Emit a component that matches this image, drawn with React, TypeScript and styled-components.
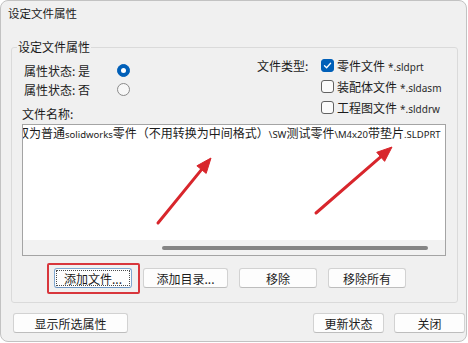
import React from "react";
import styled, { createGlobalStyle } from "styled-components";

const GlobalStyle = createGlobalStyle`
  html, body {
    margin: 0;
    padding: 0;
    background: #ffffff;
  }
  body {
    font-family: "Noto Sans CJK SC", "Noto Sans", sans-serif;
    font-size: 12px;
    color: #1b1b1b;
  }
  * {
    box-sizing: border-box;
  }
`;

const Window = styled.div`
  width: 467px;
  height: 342px;
  background: #f0f0f0;
  border: 1px solid #c2c2c2;
  border-radius: 8px;
  display: flex;
  flex-direction: column;
  overflow: hidden;
`;

const TitleBar = styled.div`
  height: 25px;
  line-height: 25px;
  padding-left: 7px;
  font-size: 11.5px;
  color: #1a1a1a;
`;

const Group = styled.fieldset`
  margin: 13px 8px 0 10px;
  padding: 0 10px 14px 10px;
  border: 1px solid #dadada;
  border-radius: 3px;
  min-width: 0;
`;

const Legend = styled.legend`
  padding: 0 1px;
  margin-left: -5px;
  line-height: 16px;
  font-size: 12px;
`;

const TopSection = styled.div`
  display: flex;
`;

const LeftCol = styled.div`
  width: 235px;
  padding-top: 6px;
  display: flex;
  flex-direction: column;
`;

const RadioRow = styled.label`
  display: flex;
  align-items: center;
  height: 19px;
  margin-left: 2px;
`;

const RadioText = styled.span`
  width: 93px;
`;

const Radio = styled.span<{ $on?: boolean }>`
  width: 13px;
  height: 13px;
  border-radius: 50%;
  display: flex;
  align-items: center;
  justify-content: center;
  background: ${p => (p.$on ? "#005fb8" : "#f7f7f7")};
  border: 1px solid ${p => (p.$on ? "#005fb8" : "#8a8a8a")};

  &::after {
    content: "";
    display: ${p => (p.$on ? "block" : "none")};
    width: 5px;
    height: 5px;
    border-radius: 50%;
    background: #ffffff;
  }
`;

const FieldLabel = styled.div`
  height: 19px;
  line-height: 19px;
  margin-top: 5px;
`;

const RightCol = styled.div`
  display: flex;
`;

const TypeLabel = styled.div`
  width: 64px;
  height: 21px;
  line-height: 21px;
`;

const TypeList = styled.div`
  display: flex;
  flex-direction: column;
`;

const CheckRow = styled.label`
  display: flex;
  align-items: center;
  height: 21px;
  gap: 3px;
`;

const Check = styled.span<{ $on?: boolean }>`
  width: 13px;
  height: 13px;
  border-radius: 3px;
  display: flex;
  align-items: center;
  justify-content: center;
  background: ${p => (p.$on ? "#005fb8" : "#fbfbfb")};
  border: 1px solid ${p => (p.$on ? "#005fb8" : "#626262")};
`;

const Ext = styled.span`
  font-family: "Noto Sans", sans-serif;
  font-size: 10px;
  color: #2b2b2b;
  margin-left: 3px;
`;

const ListBox = styled.div`
  position: relative;
  margin-top: 1px;
  width: 424px;
  height: 132px;
  background: #ffffff;
  border: 1px solid #a4a4a4;
  display: flex;
  flex-direction: column;
  overflow: hidden;
`;

const Rows = styled.div`
  flex: 1;
`;

const Row = styled.div`
  height: 16px;
  line-height: 16px;
  white-space: nowrap;
  overflow: hidden;
  font-size: 12px;
  text-indent: -6px;
`;

const Latin = styled.span`
  font-family: "Noto Sans", sans-serif;
  font-size: 9.5px;
`;

const HScroll = styled.div`
  height: 15px;
  background: #f2f2f2;
  display: flex;
  align-items: center;
`;

const Thumb = styled.div`
  margin-left: 139px;
  width: 266px;
  height: 4px;
  border-radius: 2px;
  background: #858585;
`;

const Arrows = styled.svg`
  position: absolute;
  left: 0;
  top: 0;
  pointer-events: none;
`;

const ButtonRow = styled.div`
  display: flex;
  margin-top: 12px;
  margin-left: 32px;
  gap: 11px;
`;

const Button = styled.button<{ $w: number; $focus?: boolean }>`
  position: relative;
  width: ${p => p.$w}px;
  height: 20px;
  padding: 0;
  font-family: "Noto Sans CJK SC", "Noto Sans", sans-serif;
  font-size: 12px;
  color: #1b1b1b;
  background: #fdfdfd;
  border: 1px solid ${p => (p.$focus ? "#7fa6cf" : "#d2d2d2")};
  border-bottom-color: ${p => (p.$focus ? "#6a93c0" : "#bdbdbd")};
  border-radius: 3px;
  outline: ${p => (p.$focus ? "1px dotted #4a4a4a" : "none")};
  outline-offset: -3px;
`;

const Highlight = styled.span`
  position: absolute;
  top: -6px;
  bottom: -7px;
  left: -8px;
  right: -9px;
  border: 2px solid #d8363c;
  border-radius: 2px;
  pointer-events: none;
`;

const Footer = styled.div`
  display: flex;
  justify-content: space-between;
  margin-top: 10px;
  padding: 0 1px 0 12px;
`;

const FooterRight = styled.div`
  display: flex;
  gap: 10px;
`;

const CheckMark = () => (
  <svg width="9" height="9" viewBox="0 0 9 9">
    <path d="M1.5 4.7 L3.6 6.7 L7.6 2.3" fill="none" stroke="#ffffff" strokeWidth="1.3" strokeLinecap="round" strokeLinejoin="round" />
  </svg>
);

const Arrow = ({ x1, y1, x2, y2 }: { x1: number; y1: number; x2: number; y2: number }) => {
  const ang = Math.atan2(y2 - y1, x2 - x1);
  const len = 15;
  const half = 6;
  const bx = x2 - len * Math.cos(ang);
  const by = y2 - len * Math.sin(ang);
  const px = -Math.sin(ang) * half;
  const py = Math.cos(ang) * half;
  return (
    <g fill="#d8262c" stroke="#d8262c">
      <line x1={x1} y1={y1} x2={bx} y2={by} strokeWidth="3" strokeLinecap="round" />
      <polygon points={`${x2},${y2} ${bx + px},${by + py} ${bx - px},${by - py}`} strokeWidth="1" strokeLinejoin="round" />
    </g>
  );
};

const App = () => {
  return (
    <>
      <GlobalStyle />
      <Window>
        <TitleBar>设定文件属性</TitleBar>
        <Group>
          <Legend>设定文件属性</Legend>
          <TopSection>
            <LeftCol>
              <RadioRow>
                <RadioText>属性状态: 是</RadioText>
                <Radio $on />
              </RadioRow>
              <RadioRow>
                <RadioText>属性状态: 否</RadioText>
                <Radio />
              </RadioRow>
              <FieldLabel>文件名称:</FieldLabel>
            </LeftCol>
            <RightCol>
              <TypeLabel>文件类型:</TypeLabel>
              <TypeList>
                <CheckRow>
                  <Check $on>
                    <CheckMark />
                  </Check>
                  <span>
                    零件文件<Ext>*.sldprt</Ext>
                  </span>
                </CheckRow>
                <CheckRow>
                  <Check />
                  <span>
                    装配体文件<Ext>*.sldasm</Ext>
                  </span>
                </CheckRow>
                <CheckRow>
                  <Check />
                  <span>
                    工程图文件<Ext>*.slddrw</Ext>
                  </span>
                </CheckRow>
              </TypeList>
            </RightCol>
          </TopSection>
          <ListBox>
            <Rows>
              <Row>
                双为普通<Latin>solidworks</Latin>零件（不用转换为中间格式）<Latin>\SW</Latin>测试零件<Latin>\M4x20</Latin>带垫片<Latin>.SLDPRT</Latin>
              </Row>
            </Rows>
            <HScroll>
              <Thumb />
            </HScroll>
            <Arrows width="424" height="132">
              <Arrow x1={135} y1={98} x2={188} y2={33} />
              <Arrow x1={293} y1={88} x2={369} y2={22} />
            </Arrows>
          </ListBox>
          <ButtonRow>
            <Button $w={78} $focus>
              添加文件...
              <Highlight />
            </Button>
            <Button $w={85}>添加目录...</Button>
            <Button $w={78}>移除</Button>
            <Button $w={78}>移除所有</Button>
          </ButtonRow>
        </Group>
        <Footer>
          <Button $w={115}>显示所选属性</Button>
          <FooterRight>
            <Button $w={71}>更新状态</Button>
            <Button $w={71}>关闭</Button>
          </FooterRight>
        </Footer>
      </Window>
    </>
  );
};

export default App;
